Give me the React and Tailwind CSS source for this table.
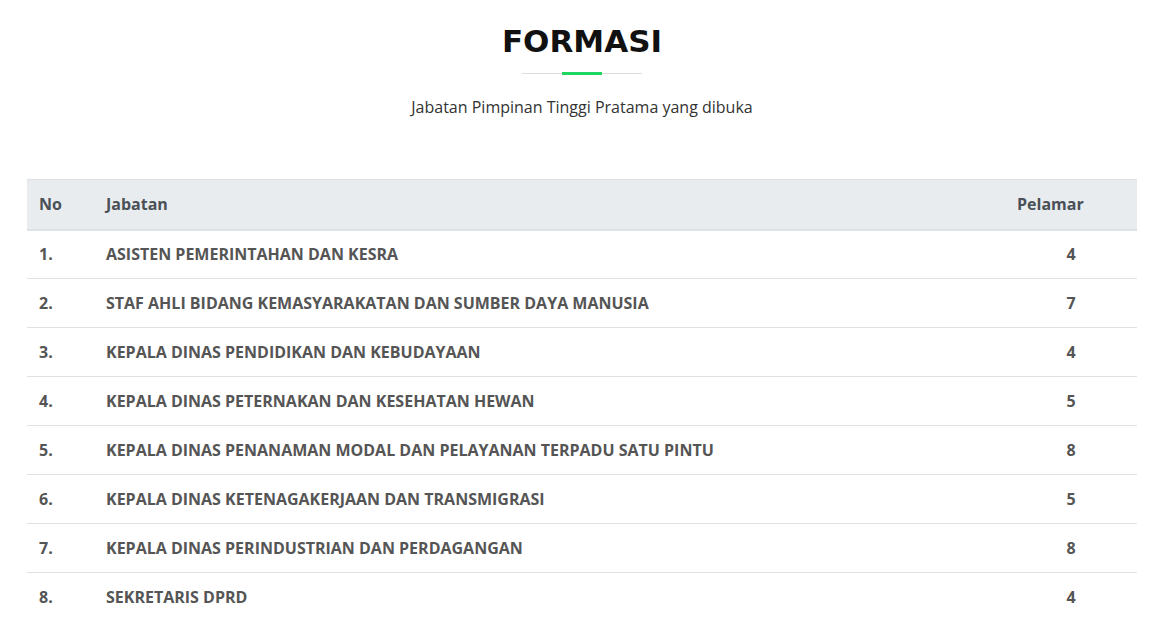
import React from 'react';

const rows = [
  ['1.', 'ASISTEN PEMERINTAHAN DAN KESRA', 4],
  ['2.', 'STAF AHLI BIDANG KEMASYARAKATAN DAN SUMBER DAYA MANUSIA', 7],
  ['3.', 'KEPALA DINAS PENDIDIKAN DAN KEBUDAYAAN', 4],
  ['4.', 'KEPALA DINAS PETERNAKAN DAN KESEHATAN HEWAN', 5],
  ['5.', 'KEPALA DINAS PENANAMAN MODAL DAN PELAYANAN TERPADU SATU PINTU', 8],
  ['6.', 'KEPALA DINAS KETENAGAKERJAAN DAN TRANSMIGRASI', 5],
  ['7.', 'KEPALA DINAS PERINDUSTRIAN DAN PERDAGANGAN', 8],
  ['8.', 'SEKRETARIS DPRD', 4],
];

function App() {
  return (
    <div className="min-h-screen bg-white font-['Open_Sans',sans-serif] text-[#333]">
      <section className="max-w-[1110px] mx-auto pt-[19px]">
        {/* judul */}
        <div className="flex flex-col items-center">
          <h2 className="font-['DejaVu_Sans',sans-serif] font-bold text-[31px] leading-[44px] text-[#111]">FORMASI</h2>
          <div className="relative w-[120px] h-px bg-[#dddddd] mt-[10px]">
            <div className="absolute left-[40px] -top-px w-[40px] h-[3px] bg-[#1ed760]"></div>
          </div>
          <p className="mt-[21px] text-[16px] leading-6">Jabatan Pimpinan Tinggi Pratama yang dibuka</p>
        </div>

        <table className="w-full mt-[60px] border-collapse text-left">
          <thead>
            <tr className="bg-[#e9ecef] text-[#495057] border-t border-b-2 border-[#dee2e6]">
              <th className="w-[67px] px-3 h-[50px] text-[16px] font-bold">No</th>
              <th className="px-3 text-[16px] font-bold">Jabatan</th>
              <th className="w-[132px] px-3 text-[16px] font-bold">Pelamar</th>
            </tr>
          </thead>
          <tbody>
            {rows.map((r, i) => (
              <tr key={r[0]} className={i < rows.length - 1 ? 'border-b border-[#dee2e6]' : ''}>
                <td className="px-3 h-[49px] text-[16px] font-bold text-[#555]">{r[0]}</td>
                <td className="px-3 text-[16px] font-bold text-[#555]">{r[1]}</td>
                <td className="px-3 text-[16px] font-bold text-[#555] text-center">{r[2]}</td>
              </tr>
            ))}
          </tbody>
        </table>
      </section>
    </div>
  );
}

export default App;
